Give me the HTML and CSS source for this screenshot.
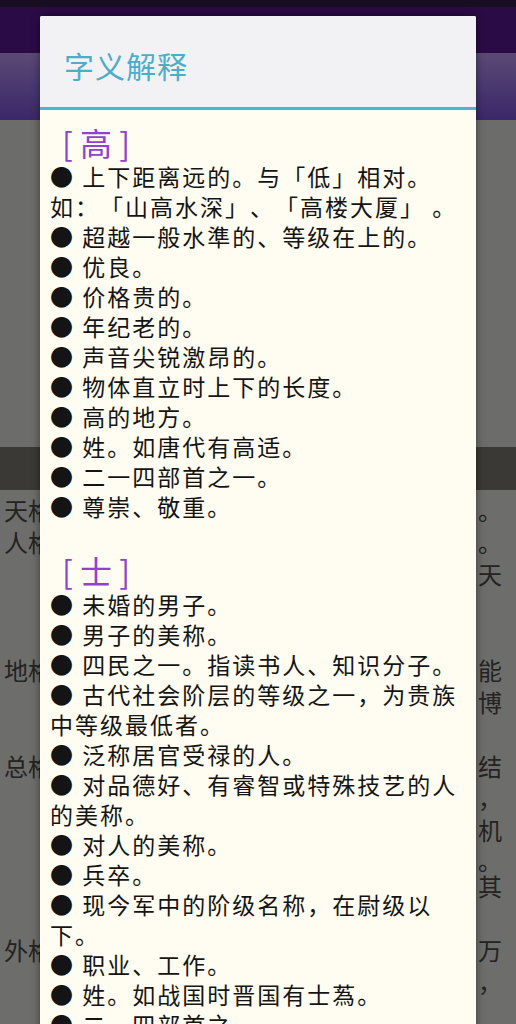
FILE: index.html
```html
<!DOCTYPE html>
<html lang="zh-CN">
<head>
<meta charset="utf-8">
<title>字义解释</title>
<link rel="stylesheet" href="styles.css">
</head>
<body>
<div class="screen">
  <div class="statusbar"></div>
  <div class="appbar"></div>
  <div class="tabbar"></div>
  <div class="upper"></div>
  <div class="section"></div>
  <div class="bgtext">
    <div class="row"><span class="l">天格</span><span class="r">。</span></div>
    <div class="row"><span class="l">人格</span><span class="r">。</span></div>
    <div class="row"><span class="l"></span><span class="r">天</span></div>
    <div class="row"></div>
    <div class="row"></div>
    <div class="row"><span class="l">地格</span><span class="r">能</span></div>
    <div class="row"><span class="l"></span><span class="r">博</span></div>
    <div class="row"></div>
    <div class="row"><span class="l">总格</span><span class="r">结</span></div>
    <div class="row"><span class="l"></span><span class="r">，</span></div>
    <div class="row"><span class="l"></span><span class="r">机</span></div>
    <div class="row short"><span class="l"></span><span class="r">。</span></div>
    <div class="row tight"><span class="l"></span><span class="r">其</span></div>
    <div class="row gap"></div>
    <div class="row"><span class="l">外格</span><span class="r">万</span></div>
    <div class="row"><span class="l"></span><span class="r">，</span></div>
  </div>

  <div class="dialog">
    <div class="dlg-title">字义解释</div>
    <div class="dlg-body">
      <div class="head">[ 高 ]</div>
      <p>● 上下距离远的。与「低」相对。如：「山高水深」、「高楼大厦」 。</p>
      <p>● 超越一般水準的、等级在上的。</p>
      <p>● 优良。</p>
      <p>● 价格贵的。</p>
      <p>● 年纪老的。</p>
      <p>● 声音尖锐激昂的。</p>
      <p>● 物体直立时上下的长度。</p>
      <p>● 高的地方。</p>
      <p>● 姓。如唐代有高适。</p>
      <p>● 二一四部首之一。</p>
      <p>● 尊崇、敬重。</p>
      <div class="blank"></div>
      <div class="head">[ 士 ]</div>
      <p>● 未婚的男子。</p>
      <p>● 男子的美称。</p>
      <p>● 四民之一。指读书人、知识分子。</p>
      <p>● 古代社会阶层的等级之一，为贵族中等级最低者。</p>
      <p>● 泛称居官受禄的人。</p>
      <p>● 对品德好、有睿智或特殊技艺的人的美称。</p>
      <p>● 对人的美称。</p>
      <p>● 兵卒。</p>
      <p>● 现今军中的阶级名称，在尉级以下。</p>
      <p>● 职业、工作。</p>
      <p>● 姓。如战国时晋国有士蒍。</p>
      <p>● 二一四部首之一。</p>
    </div>
  </div>
</div>
</body>
</html>
```

FILE: styles.css
```css
html, body {
  margin: 0;
  padding: 0;
}
body {
  width: 516px;
  height: 1024px;
  overflow: hidden;
  font-family: "Noto Sans CJK SC", "Noto Sans", sans-serif;
  background: #6c6c6a;
  text-spacing-trim: space-all;
}
.screen {
  position: relative;
  width: 516px;
  height: 1024px;
  overflow: hidden;
  display: flex;
  flex-direction: column;
}
.statusbar {
  height: 7px;
  background: #1b0d20;
  flex: none;
}
.appbar {
  height: 46px;
  background: #2b0b46;
  flex: none;
}
.tabbar {
  height: 67px;
  background: linear-gradient(180deg, #5b4a74 0%, #4a3870 50%, #3c2768 100%);
  flex: none;
}
.upper {
  height: 327px;
  background: #6c6c6a;
  flex: none;
}
.section {
  height: 43px;
  background: #3a3935;
  flex: none;
}
.bgtext {
  flex: 1;
  background: #6d6d6b;
  padding-top: 4px;
  color: #232322;
  font-size: 24px;
}
.row {
  height: 32px;
  line-height: 32px;
  display: flex;
  justify-content: space-between;
  padding: 0 14px 0 4px;
}
.row.short {
  height: 28px;
  line-height: 28px;
}
.row.tight {
  height: 24px;
  line-height: 24px;
}
.row.gap {
  height: 36px;
}
.row .r {
  width: 24px;
  text-align: left;
}

.dialog {
  position: absolute;
  left: 40px;
  top: 16px;
  width: 436px;
  bottom: -40px;
  background: #fffdf1;
  border-radius: 2px 2px 0 0;
  box-shadow: 0 0 8px rgba(0, 0, 0, 0.45);
  overflow: hidden;
}
.dlg-title {
  height: 84px;
  padding: 7px 0 0 24px;
  background: #f2f2f4;
  border-bottom: 3px solid #4db4d2;
  color: #4aaeca;
  font-size: 30px;
  letter-spacing: 1px;
  display: flex;
  align-items: center;
}
.dlg-body {
  padding: 13px 10px 0 10px;
  color: #141414;
  font-size: 23px;
  letter-spacing: 2px;
  line-height: 30px;
  text-spacing-trim: space-all;
}
.dlg-body p {
  margin: 0;
}
.head {
  height: 38px;
  line-height: 38px;
  padding-left: 12px;
  font-size: 32px;
  letter-spacing: 0;
  color: #9142cb;
}
.blank {
  height: 30px;
}
```
